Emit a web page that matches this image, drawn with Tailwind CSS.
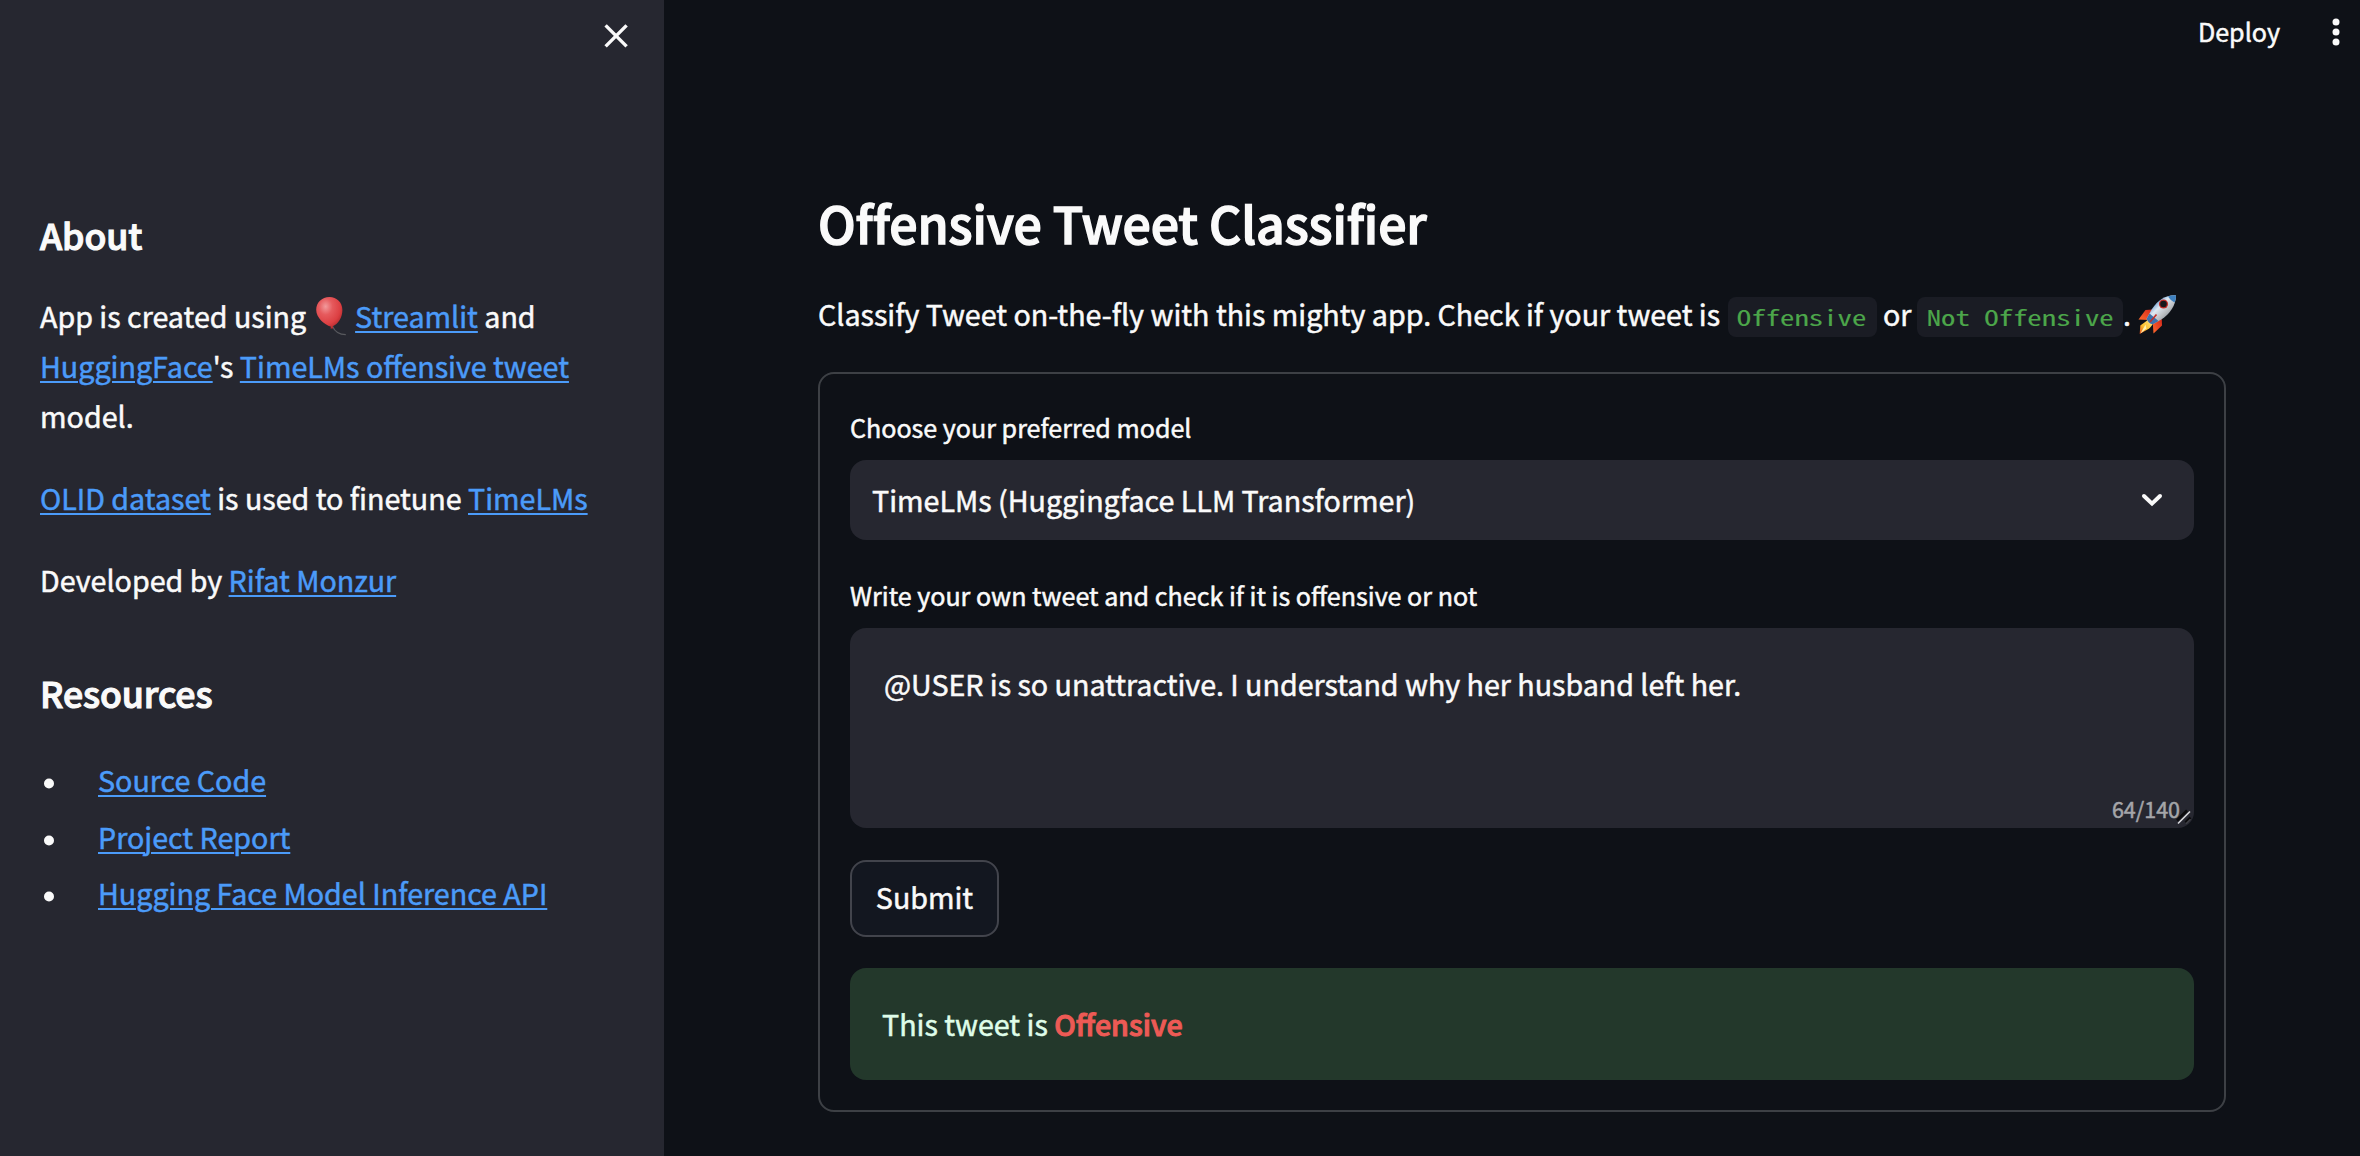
<!DOCTYPE html>
<html lang="en">
<head>
<meta charset="utf-8">
<title>Offensive Tweet Classifier</title>
<script src="https://cdn.jsdelivr.net/npm/@tailwindcss/browser@4"></script>
</head>
<body class="flex h-[1156px] w-[2360px] overflow-hidden bg-[#0e1117] font-['Noto_Sans_CJK_SC','Noto_Sans',sans-serif] text-[28.65px] text-[#fafafa] [-webkit-text-stroke:0.5px]">

<aside class="flex h-full w-[664px] shrink-0 flex-col bg-[#262730]">
  <div class="flex h-[72px] justify-end pt-[20px] pr-[32px]">
    <svg class="size-8" viewBox="0 0 32 32" fill="none" stroke="#fafafa" stroke-width="3.4"><path d="M5.6 5.4 26.6 26.4M26.6 5.4 5.6 26.4"/></svg>
  </div>
  <div class="pt-[141px] pl-10">
    <h2 class="text-[35.7px] leading-[44px] font-medium tracking-[-0.12px] [-webkit-text-stroke:1.1px]">About</h2>
    <p class="mt-[34px] leading-[50px] whitespace-nowrap">App is created using <svg class="ml-px inline-block h-[40px] w-[35px] -translate-y-[4px]" viewBox="0 0 35 40"><defs><radialGradient id="bal" cx=".36" cy=".3" r=".75"><stop offset="0" stop-color="#f29a9c"/><stop offset=".35" stop-color="#e65a5d"/><stop offset=".75" stop-color="#dc3f42"/><stop offset="1" stop-color="#b02a2d"/></radialGradient></defs><path d="M18.6 30.5c1.500 3.500 5 8 13.200 8.200" fill="none" stroke="#58595e" stroke-width="1.200"/><path d="M15.500 1C7.800 1 2.200 6.500 2.200 13.800c0 8 8 14.800 14.800 17l-.6 1.800h3l-.7-2.300c5.300-2 9.700-8.800 9.700-16.300C28.400 6.500 22.800 1 15.500 1Z" fill="url(#bal)"/></svg> <a class="text-[#4b9bf9] underline decoration-2 underline-offset-[3px]">Streamlit</a> and<br><a class="text-[#4b9bf9] underline decoration-2 underline-offset-[3px]">HuggingFace</a>'s <a class="text-[#4b9bf9] underline decoration-2 underline-offset-[3px]">TimeLMs offensive tweet</a><br>model.</p>
    <p class="mt-8 leading-[50px]"><a class="text-[#4b9bf9] underline decoration-2 underline-offset-[3px]">OLID dataset</a> is used to finetune <a class="text-[#4b9bf9] underline decoration-2 underline-offset-[3px]">TimeLMs</a></p>
    <p class="mt-8 leading-[50px]">Developed by <a class="text-[#4b9bf9] underline decoration-2 underline-offset-[3px]">Rifat Monzur</a></p>
    <h2 class="mt-[66px] text-[35.7px] leading-[44px] font-medium tracking-[-0.12px] [-webkit-text-stroke:1.1px]">Resources</h2>
    <ul class="mt-[40px] flex flex-col gap-[6.5px] leading-[50px]">
      <li class="flex items-center"><span class="ml-1 mr-[44px] size-[10px] translate-y-[3.5px] rounded-full bg-[#fafafa]"></span><a class="text-[#4b9bf9] underline decoration-2 underline-offset-[3px]">Source Code</a></li>
      <li class="flex items-center"><span class="ml-1 mr-[44px] size-[10px] translate-y-[3.5px] rounded-full bg-[#fafafa]"></span><a class="text-[#4b9bf9] underline decoration-2 underline-offset-[3px]">Project Report</a></li>
      <li class="flex items-center"><span class="ml-1 mr-[44px] size-[10px] translate-y-[3.5px] rounded-full bg-[#fafafa]"></span><a class="text-[#4b9bf9] underline decoration-2 underline-offset-[3px]">Hugging Face Model Inference API</a></li>
    </ul>
  </div>
</aside>

<main class="flex h-full grow flex-col">
  <header class="flex h-[64px] items-center justify-end pr-[20px]">
    <span class="mr-[52px] pb-[2px] text-[25.1px] leading-[40px]">Deploy</span>
    <svg class="h-8 w-2" viewBox="0 0 8 32" fill="#fafafa"><circle cx="4" cy="6" r="3.500"/><circle cx="4" cy="16" r="3.500"/><circle cx="4" cy="26" r="3.500"/></svg>
  </header>

  <div class="ml-[154px] w-[1408px]">
    <h1 class="mt-[126px] text-[50px] leading-[64px] font-medium tracking-[-0.13px] [-webkit-text-stroke:1.4px]">Offensive Tweet Classifier</h1>
    <p class="mt-[35px] flex h-[50px] leading-[50px] whitespace-pre">Classify Tweet on-the-fly with this mighty app. Check if your tweet is <code class="ml-px mt-[8px] flex h-10 w-[149px] justify-center rounded-lg bg-[#1a1c24] font-['Noto_Sans_Mono_CJK_SC',monospace] text-[21.6px] leading-[40px] text-[#4ca64a] [-webkit-text-stroke:0.1px]"><span class="scale-x-[1.333]">Offensive</span></code> or <code class="-ml-px mt-[8px] flex h-10 w-[206px] justify-center rounded-lg bg-[#1a1c24] font-['Noto_Sans_Mono_CJK_SC',monospace] text-[21.6px] leading-[40px] text-[#4ca64a] [-webkit-text-stroke:0.1px]"><span class="scale-x-[1.333]">Not Offensive</span></code><span>. </span><svg class="mt-[6px] h-[39px] w-[40px]" viewBox="0 0 40 39"><defs><linearGradient id="hull" x1="0" y1="0" x2="1" y2="1"><stop offset=".2" stop-color="#3f7fc4"/><stop offset=".42" stop-color="#dfe9f2"/><stop offset=".62" stop-color="#b9bcc0"/><stop offset=".9" stop-color="#5d6a7a"/></linearGradient><linearGradient id="fin" x1="1" y1="0" x2="0" y2="1"><stop offset="0" stop-color="#d5281c"/><stop offset="1" stop-color="#ff6a2c"/></linearGradient><linearGradient id="flame" x1="1" y1="0" x2="0" y2="1"><stop offset="0" stop-color="#ffe98a"/><stop offset=".6" stop-color="#fbc12e"/><stop offset="1" stop-color="#e0441b"/></linearGradient></defs><path d="M15.500 14.500 8.500 15 1.500 24.600l9.500.4Z" fill="url(#fin)"/><path d="M24.800 24 25 30.500 16.500 38.600 15.800 28.500Z" fill="url(#fin)"/><path d="M9.500 26c1-2 5-2.400 6.400-.6 1.200 2-1.400 6.600-5.400 9.200L2.700 39l.6-8.500Z" fill="url(#flame)"/><path d="M8.500 29.500 3.500 38.600l6-5Z" fill="#fff2b0"/><path d="M39 .4C29-.2 21.500 4.500 14.800 14.300L9.600 23.800c1 3 3.200 5.200 6.200 5.400l8.600-4.800C33 18.500 38.800 10.500 39 .4Z" fill="url(#hull)"/><path d="M39 .4C36 .2 33.400.6 31 1.500c1.600 2.600 4 4.600 6.500 6C38.600 5.200 39 2.800 39 .4Z" fill="#3e80bf"/><path d="m12.500 18.500 9 7.500-5.700 3.200c-3-.2-5.200-2.400-6.200-5.400Z" fill="#3c72ac"/><path d="m13 27 6.500-7.500" stroke="#c32d28" stroke-width="1.600"/><circle cx="26.500" cy="9" r="4.600" fill="#c32d28"/><circle cx="26.500" cy="9" r="3.300" fill="#17181c"/></svg></p>

    <form class="mt-[33px] h-[740px] rounded-[16px] border-2 border-[#3d4045] px-[30px] pt-[37px]">
      <label class="block h-[49px] text-[25.08px] leading-[32px]">Choose your preferred model</label>
      <div class="flex h-20 items-center justify-between rounded-[16px] bg-[#262730] pr-[30px] pl-[22px]">
        <span class="leading-[50px]">TimeLMs (Huggingface LLM Transformer)</span>
        <svg class="h-[16px] w-[24px]" viewBox="0 0 24 16" fill="none" stroke="#fafafa" stroke-width="4" stroke-linecap="round"><path d="m4 4 8 7.600 8-7.600"/></svg>
      </div>
      <label class="mt-[39px] block h-[49px] text-[25.08px] leading-[32px]">Write your own tweet and check if it is offensive or not</label>
      <div class="relative h-[200px] rounded-[16px] bg-[#262730] pt-[31px] pl-[34px]">
        <div class="leading-[50px] tracking-[-0.02px]">@USER is so unattractive. I understand why her husband left her.</div>
        <span class="absolute right-[14px] bottom-[3px] text-[21.5px] leading-[32px] text-[#a5a6aa]">64/140</span>
        <svg class="absolute right-0 bottom-0 size-5" viewBox="0 0 20 20" fill="none" stroke-width="1.600"><path d="M3 12.500 13 2.500M11.500 14.500l5-5" stroke="#0b0b0d" stroke-width="2.500"/><path d="M4 15.500 16 3.500" stroke="#d9d9dc"/><path d="m12 15.800 4.500-4.500" stroke="#3f4046"/></svg>
      </div>
      <button type="button" class="mt-8 flex h-[77px] w-[149px] items-center justify-center rounded-[16px] border-2 border-[#42444c] bg-[#131720] pb-[3px]"><span class="leading-[50px]">Submit</span></button>
      <div class="mt-[31px] flex h-28 items-center rounded-[16px] bg-[#23382b] pl-8 leading-[50px] text-[#dffde9]"><p>This tweet is <strong class="font-medium text-[#ed5a55] [-webkit-text-stroke:1px]">Offensive</strong></p></div>
    </form>
  </div>
</main>
</body>
</html>
